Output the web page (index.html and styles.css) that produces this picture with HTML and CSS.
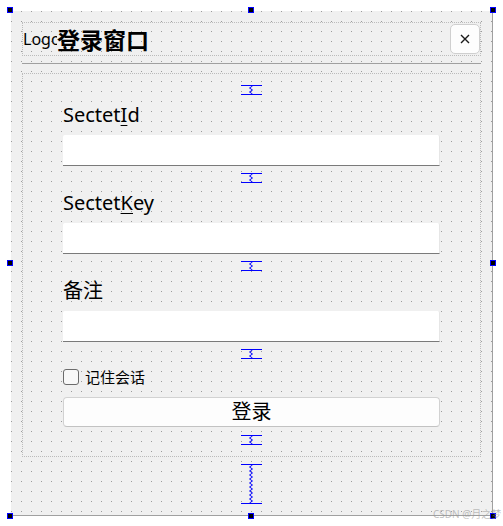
FILE: index.html
```html
<!DOCTYPE html>
<html lang="zh">
<head>
<meta charset="utf-8">
<title>登录窗口</title>
<link rel="stylesheet" href="styles.css">
</head>
<body>
<div class="stage">
  <div class="canvas">
    <div class="title-layout">
      <div class="logo">Logo</div>
      <div class="title">登录窗口</div>
      <div class="grow"></div>
      <button class="close" type="button" aria-label="关闭">
        <svg width="10" height="10" viewBox="0 0 10 10"><path d="M1 1 L9 9 M9 1 L1 9" stroke="#1a1a1a" stroke-width="1.4" fill="none"/></svg>
      </button>
    </div>
    <div class="hline"></div>
    <div class="form-layout">
      <div class="spacer"><svg width="21" height="10" viewBox="0 0 21 10"><path d="M0 0.5H21M0 9.5H21" stroke="#0000ff" stroke-width="1"/><polyline points="11.5,1 8.5,3 11.5,5 8.5,7 11.5,9" fill="none" stroke="#0000ff" stroke-width="1"/></svg></div>
      <div class="label">Sectet<span class="mn">I</span>d</div>
      <div class="input"></div>
      <div class="spacer gap"><svg width="21" height="10" viewBox="0 0 21 10"><path d="M0 0.5H21M0 9.5H21" stroke="#0000ff" stroke-width="1"/><polyline points="11.5,1 8.5,3 11.5,5 8.5,7 11.5,9" fill="none" stroke="#0000ff" stroke-width="1"/></svg></div>
      <div class="label">Sectet<span class="mn">K</span>ey</div>
      <div class="input"></div>
      <div class="spacer gap"><svg width="21" height="10" viewBox="0 0 21 10"><path d="M0 0.5H21M0 9.5H21" stroke="#0000ff" stroke-width="1"/><polyline points="11.5,1 8.5,3 11.5,5 8.5,7 11.5,9" fill="none" stroke="#0000ff" stroke-width="1"/></svg></div>
      <div class="label">备注</div>
      <div class="input"></div>
      <div class="spacer gap"><svg width="21" height="10" viewBox="0 0 21 10"><path d="M0 0.5H21M0 9.5H21" stroke="#0000ff" stroke-width="1"/><polyline points="11.5,1 8.5,3 11.5,5 8.5,7 11.5,9" fill="none" stroke="#0000ff" stroke-width="1"/></svg></div>
      <label class="check-row"><span class="checkbox"></span><span class="check-text">记住会话</span></label>
      <button class="login" type="button">登录</button>
      <div class="spacer gap-btn"><svg width="21" height="10" viewBox="0 0 21 10"><path d="M0 0.5H21M0 9.5H21" stroke="#0000ff" stroke-width="1"/><polyline points="11.5,1 8.5,3 11.5,5 8.5,7 11.5,9" fill="none" stroke="#0000ff" stroke-width="1"/></svg></div>
    </div>
    <div class="spacer big"><svg width="21" height="40" viewBox="0 0 21 40"><path d="M0 0.5H21M0 39.5H21" stroke="#0000ff" stroke-width="1"/><polyline points="11.5,1 8.5,3 11.5,5 8.5,7 11.5,9 8.5,11 11.5,13 8.5,15 11.5,17 8.5,19 11.5,21 8.5,23 11.5,25 8.5,27 11.5,29 8.5,31 11.5,33 8.5,35 11.5,37 8.5,39" fill="none" stroke="#0000ff" stroke-width="1"/></svg></div>
  </div>
  <span class="handle h-tl"></span>
  <span class="handle h-tc"></span>
  <span class="handle h-tr"></span>
  <span class="handle h-ml"></span>
  <span class="handle h-mr"></span>
  <span class="handle h-bl"></span>
  <span class="handle h-bc"></span>
  <span class="handle h-br"></span>
  <span class="watermark">CSDN @月之梦</span>
</div>
</body>
</html>
```
FILE: styles.css
```css
html, body {
  margin: 0;
  padding: 0;
  background: #ffffff;
}

body {
  font-family: "Noto Sans", "Noto Sans CJK SC", sans-serif;
  color: #000;
}

.stage {
  position: relative;
  width: 503px;
  height: 526px;
  padding: 11px 0 0 11px;
  box-sizing: border-box;
}

.canvas {
  border-right: 1px solid #a0a0a0;
  border-bottom: 1px solid #a0a0a0;
  background-color: #f0f0f0;
  background-image: conic-gradient(from 270deg at 1px 1px, #9c9c9c 90deg, transparent 0);
  background-size: 10px 10px;
  padding: 11px 11px 0 11px;
  box-sizing: content-box;
  width: 459px;
  height: 493px;
  display: flex;
  flex-direction: column;
}

.title-layout {
  height: 34px;
  box-sizing: border-box;
  border: 1px dotted #bcbcbc;
  display: flex;
  align-items: center;
}

.logo {
  width: 34px;
  overflow: hidden;
  white-space: nowrap;
  font-size: 16px;
  line-height: 20px;
  flex: none;
}

.title {
  font-family: "Noto Sans CJK SC", sans-serif;
  font-weight: 700;
  font-size: 23px;
  line-height: 28px;
  flex: none;
}

.grow {
  flex: 1;
}

.close {
  width: 30px;
  height: 30px;
  box-sizing: border-box;
  border: 1px solid #cfcfcf;
  border-radius: 5px;
  background: #fdfdfd;
  padding: 0;
  display: flex;
  align-items: center;
  justify-content: center;
  flex: none;
}

.hline {
  margin-top: 7px;
  height: 1px;
  background: #a0a0a0;
  flex: none;
}

.form-layout {
  margin-top: 9px;
  border: 1px dotted #bcbcbc;
  padding: 11px 40px 11px 40px;
  display: flex;
  flex-direction: column;
  flex: none;
}

.spacer {
  align-self: center;
  display: flex;
  flex: none;
}

.spacer svg {
  display: block;
}

.spacer.gap {
  margin-top: 7px;
}

.spacer.gap-btn {
  margin-top: 8px;
}

.spacer.big {
  margin-top: 7px;
}

.label {
  height: 40px;
  line-height: 40px;
  font-size: 20px;
  white-space: nowrap;
}

.mn {
  text-decoration: underline;
  text-underline-offset: 3px;
  text-decoration-thickness: 1px;
}

.input {
  height: 31px;
  box-sizing: border-box;
  background: #ffffff;
  border-bottom: 1px solid #7a7a7a;
  border-right: 1px solid #e6e6e6;
  border-radius: 2px 2px 0 0;
}

.check-row {
  margin-top: 10px;
  height: 16px;
  display: flex;
  align-items: center;
}

.checkbox {
  width: 16px;
  height: 16px;
  box-sizing: border-box;
  border: 1px solid #6b6b6b;
  border-radius: 3px;
  background: #f8f8f8;
  flex: none;
}

.check-text {
  margin-left: 6px;
  font-size: 15px;
  line-height: 16px;
}

.login {
  margin-top: 12px;
  height: 30px;
  box-sizing: border-box;
  border: 1px solid #d2d2d2;
  border-bottom-color: #c2c2c2;
  border-radius: 4px;
  background: #fdfdfd;
  font-family: "Noto Sans", "Noto Sans CJK SC", sans-serif;
  font-size: 20px;
  line-height: 26px;
  padding: 0;
  color: #000;
}

.handle {
  position: absolute;
  width: 6px;
  height: 6px;
  box-sizing: border-box;
  border: 1px solid #0000ff;
  background: #000;
}

.h-tl { left: 7px; top: 7px; }
.h-tc { left: 248px; top: 7px; }
.h-tr { left: 490px; top: 7px; }
.h-ml { left: 7px; top: 260px; }
.h-mr { left: 490px; top: 260px; }
.h-bl { left: 7px; top: 513px; }
.h-bc { left: 248px; top: 513px; }
.h-br { left: 490px; top: 513px; }

.watermark {
  position: absolute;
  left: 433px;
  top: 508px;
  font-size: 10px;
  line-height: 12px;
  color: rgba(150, 150, 150, 0.6);
  white-space: nowrap;
}
```
